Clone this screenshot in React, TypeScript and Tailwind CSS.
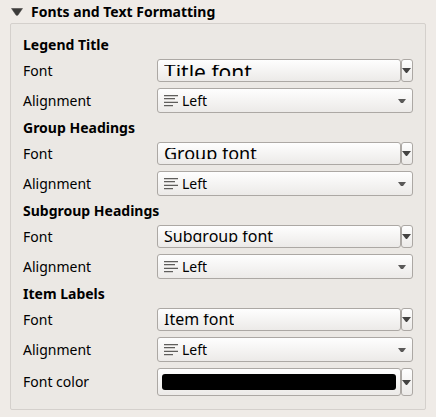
import { useState } from "react";

type Section = {
  id: string;
  title: string;
  sample: string;
  sampleClass: string;
};

const sections: Section[] = [
  { id: "title", title: "Legend Title", sample: "Title font", sampleClass: "text-[21px] pt-0.5" },
  { id: "group", title: "Group Headings", sample: "Group font", sampleClass: "text-[18px] pb-0.5" },
  { id: "subgroup", title: "Subgroup Headings", sample: "Subgroup font", sampleClass: "text-[16px] pb-0.5" },
  { id: "item", title: "Item Labels", sample: "Item font", sampleClass: "text-[16px] pb-0.5" },
];

const face = "border border-[#aca8a4] bg-linear-to-b from-[#fefefe] to-[#eceae8]";

function Triangle({ large = false }: { large?: boolean }) {
  return large ? (
    <svg width="12" height="8" viewBox="0 0 12 8" aria-hidden="true">
      <path d="M0.5 0.5h11L6.8 7.3h-1.6z" fill="#3c3b3a" stroke="#3c3b3a" strokeWidth="0.5" />
    </svg>
  ) : (
    <svg width="9" height="5" viewBox="0 0 9 5" className="shrink-0" aria-hidden="true">
      <path d="M0 0h9L5 5H4z" fill="#444342" />
    </svg>
  );
}

function MenuButton({ label }: { label: string }) {
  return (
    <button type="button" aria-label={label} className={`flex w-3 items-center justify-start rounded-[3px] ${face}`}>
      <Triangle />
    </button>
  );
}

function FontRow({ section }: { section: Section }) {
  const id = `${section.id}-font`;
  return (
    <div className="flex items-center">
      <label htmlFor={id} className="w-[134px] shrink-0">Font</label>
      <div className="flex h-[23px] grow">
        <button id={id} type="button" className={`flex grow items-center rounded-[3px] px-1.5 ${face}`}>
          <span className={`flex h-[11px] items-center overflow-hidden whitespace-nowrap ${section.sampleClass}`}>
            {section.sample}
          </span>
        </button>
        <MenuButton label={`${section.title} font options`} />
      </div>
    </div>
  );
}

function AlignmentRow({ section }: { section: Section }) {
  const id = `${section.id}-alignment`;
  return (
    <div className="flex items-center">
      <label htmlFor={id} className="w-[134px] shrink-0">Alignment</label>
      <div className="relative flex h-[25px] grow">
        <select id={id} defaultValue="Left" className={`grow appearance-none rounded-[3px] pl-6 ${face}`}>
          <option>Left</option>
          <option>Center</option>
          <option>Right</option>
        </select>
        <span className="pointer-events-none absolute inset-0 flex items-center justify-between pr-[7px] pl-[7px]">
          <svg width="14" height="12" viewBox="0 0 14 12" shapeRendering="crispEdges" aria-hidden="true">
            <path d="M0 0h14v1H0zM0 3h11v1H0zM0 7h14v1H0zM0 10h9v1H0z" fill="#5f5e5c" />
            <path d="M0 1h14v1H0zM0 4h11v1H0zM0 6h14v1H0zM0 11h9v1H0z" fill="#cfcdcb" />
          </svg>
          <svg width="8" height="4" viewBox="0 0 8 4" aria-hidden="true">
            <path d="M0 0h8L5 4H3z" fill="#5a5958" />
          </svg>
        </span>
      </div>
    </div>
  );
}

export default function App() {
  const [open, setOpen] = useState(true);
  return (
    <main className="min-h-screen bg-[#efebe7] px-2.5 pb-2 font-['Noto_Sans',sans-serif] text-[14px] leading-5 text-black">
      <h2>
        <button
          type="button"
          aria-expanded={open}
          onClick={() => setOpen(!open)}
          className="flex h-[23px] items-center gap-2 pl-px font-bold"
        >
          <Triangle large />
          Fonts and Text Formatting
        </button>
      </h2>
      {open && (
        <div className="rounded-[2px] border border-[#d4d0cc] bg-[#ebe8e4] px-3 pt-1.5 pb-[13px]">
          {sections.map((section) => (
            <section key={section.id}>
              <h3 className="flex h-[29px] items-center font-bold">{section.title}</h3>
              <div className="flex flex-col gap-1.5">
                <FontRow section={section} />
                <AlignmentRow section={section} />
              </div>
            </section>
          ))}
          <div className="mt-1.5 flex items-center">
            <label htmlFor="font-color" className="w-[134px] shrink-0">Font color</label>
            <div className="flex h-7 grow">
              <button id="font-color" type="button" className={`flex grow items-center rounded-[3px] px-1 ${face}`}>
                <span className="h-4 grow rounded-[3px] bg-black" />
              </button>
              <MenuButton label="Font color options" />
            </div>
          </div>
        </div>
      )}
    </main>
  );
}
